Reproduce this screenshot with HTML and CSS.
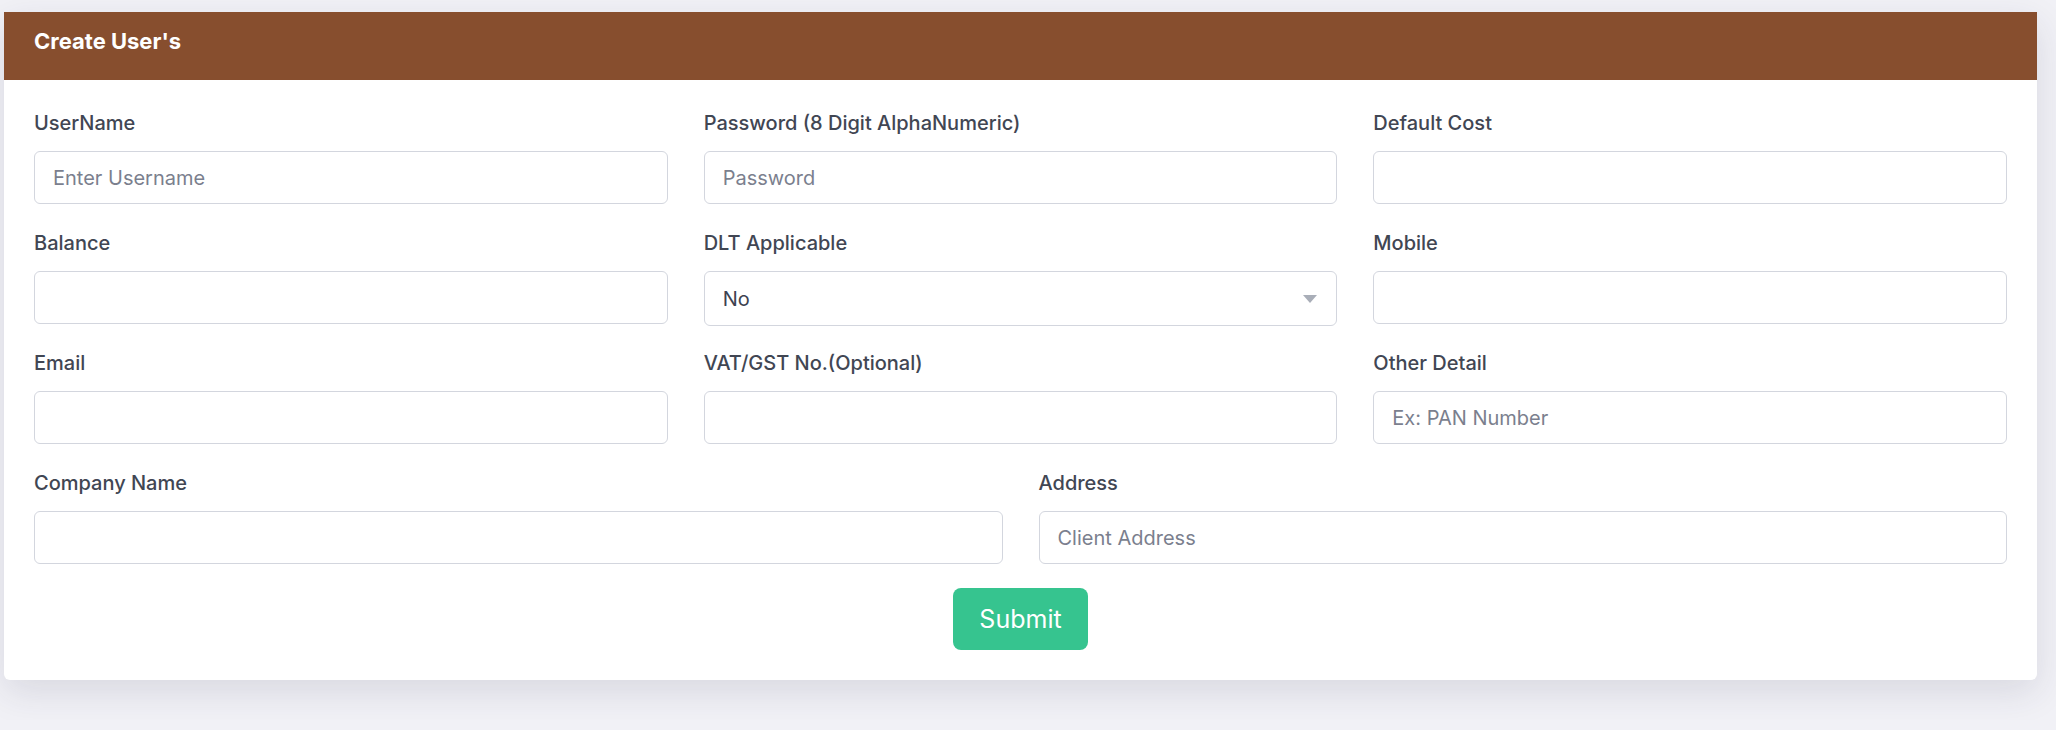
FILE: index.html
```html
<!DOCTYPE html>
<html lang="en">

<head>
  <meta charset="UTF-8">
  <title>Create User's</title>
  <link rel="stylesheet" href="styles.css">
</head>

<body>
  <div class="card">
    <div class="card-header">Create User's</div>

    <form class="card-body">
      <div class="form-row three">
        <div class="field">
          <label for="username">UserName</label>
          <input type="text" id="username" placeholder="Enter Username">
        </div>
        <div class="field">
          <label for="password">Password (8 Digit AlphaNumeric)</label>
          <input type="text" id="password" placeholder="Password">
        </div>
        <div class="field">
          <label for="cost">Default Cost</label>
          <input type="text" id="cost">
        </div>
      </div>

      <div class="form-row three">
        <div class="field">
          <label for="balance">Balance</label>
          <input type="text" id="balance">
        </div>
        <div class="field">
          <label for="dlt">DLT Applicable</label>
          <div class="select-wrap">
            <select id="dlt">
              <option>No</option>
              <option>Yes</option>
            </select>
          </div>
        </div>
        <div class="field">
          <label for="mobile">Mobile</label>
          <input type="text" id="mobile">
        </div>
      </div>

      <div class="form-row three">
        <div class="field">
          <label for="email">Email</label>
          <input type="text" id="email">
        </div>
        <div class="field">
          <label for="vat">VAT/GST No.(Optional)</label>
          <input type="text" id="vat">
        </div>
        <div class="field">
          <label for="other">Other Detail</label>
          <input type="text" id="other" placeholder="Ex: PAN Number">
        </div>
      </div>

      <div class="form-row two">
        <div class="field">
          <label for="company">Company Name</label>
          <input type="text" id="company">
        </div>
        <div class="field">
          <label for="address">Address</label>
          <input type="text" id="address" placeholder="Client Address">
        </div>
      </div>

      <div class="actions">
        <button type="button">Submit</button>
      </div>
    </form>
  </div>
</body>

</html>
```

FILE: styles.css
```css
body {
  font-family: 'Inter', 'Liberation Sans', sans-serif;
  margin: 0;
  padding: 12px 19px 40px 4px;
  background-color: #f1f1f6;
  color: #3f4451;
}

.card {
  background: #ffffff;
  border-radius: 0 0 6px 6px;
  box-shadow: 0 12px 36px rgba(40, 40, 70, 0.12);
}

.card-header {
  background-color: #874e2e;
  color: #ffffff;
  font-size: 22px;
  font-weight: 700;
  line-height: 28px;
  padding: 15px 30px 25px;
}

.card-body {
  padding: 28px 30px 30px;
}

.form-row {
  display: grid;
  column-gap: 36px;
  margin-bottom: 24px;
}

.form-row.three {
  grid-template-columns: repeat(3, 1fr);
}

.form-row.two {
  grid-template-columns: repeat(2, 1fr);
  margin-bottom: 24px;
}

.field label {
  display: block;
  font-size: 20px;
  font-weight: 500;
  line-height: 30px;
  margin-bottom: 13px;
  color: #414653;
}

input[type="text"],
select {
  display: block;
  width: 100%;
  height: 53px;
  box-sizing: border-box;
  padding: 0 18px;
  font-family: inherit;
  font-size: 20px;
  color: #3d4250;
  background: #ffffff;
  border: 1px solid #d3d6de;
  border-radius: 6px;
  outline: none;
}

input::placeholder {
  color: #7b7f8e;
}

.select-wrap {
  position: relative;
}

select {
  height: 55px;
  margin-bottom: -2px;
  appearance: none;
  -webkit-appearance: none;
}

.select-wrap::after {
  content: "";
  position: absolute;
  right: 20px;
  top: 24px;
  border-left: 7px solid transparent;
  border-right: 7px solid transparent;
  border-top: 8px solid #a9aeb8;
  pointer-events: none;
}

.actions {
  display: flex;
  justify-content: center;
}

button {
  font-family: inherit;
  font-size: 25px;
  line-height: 38px;
  padding: 12px 26px;
  border: none;
  border-radius: 8px;
  background-color: #36c48f;
  color: #ffffff;
  cursor: pointer;
}
```
